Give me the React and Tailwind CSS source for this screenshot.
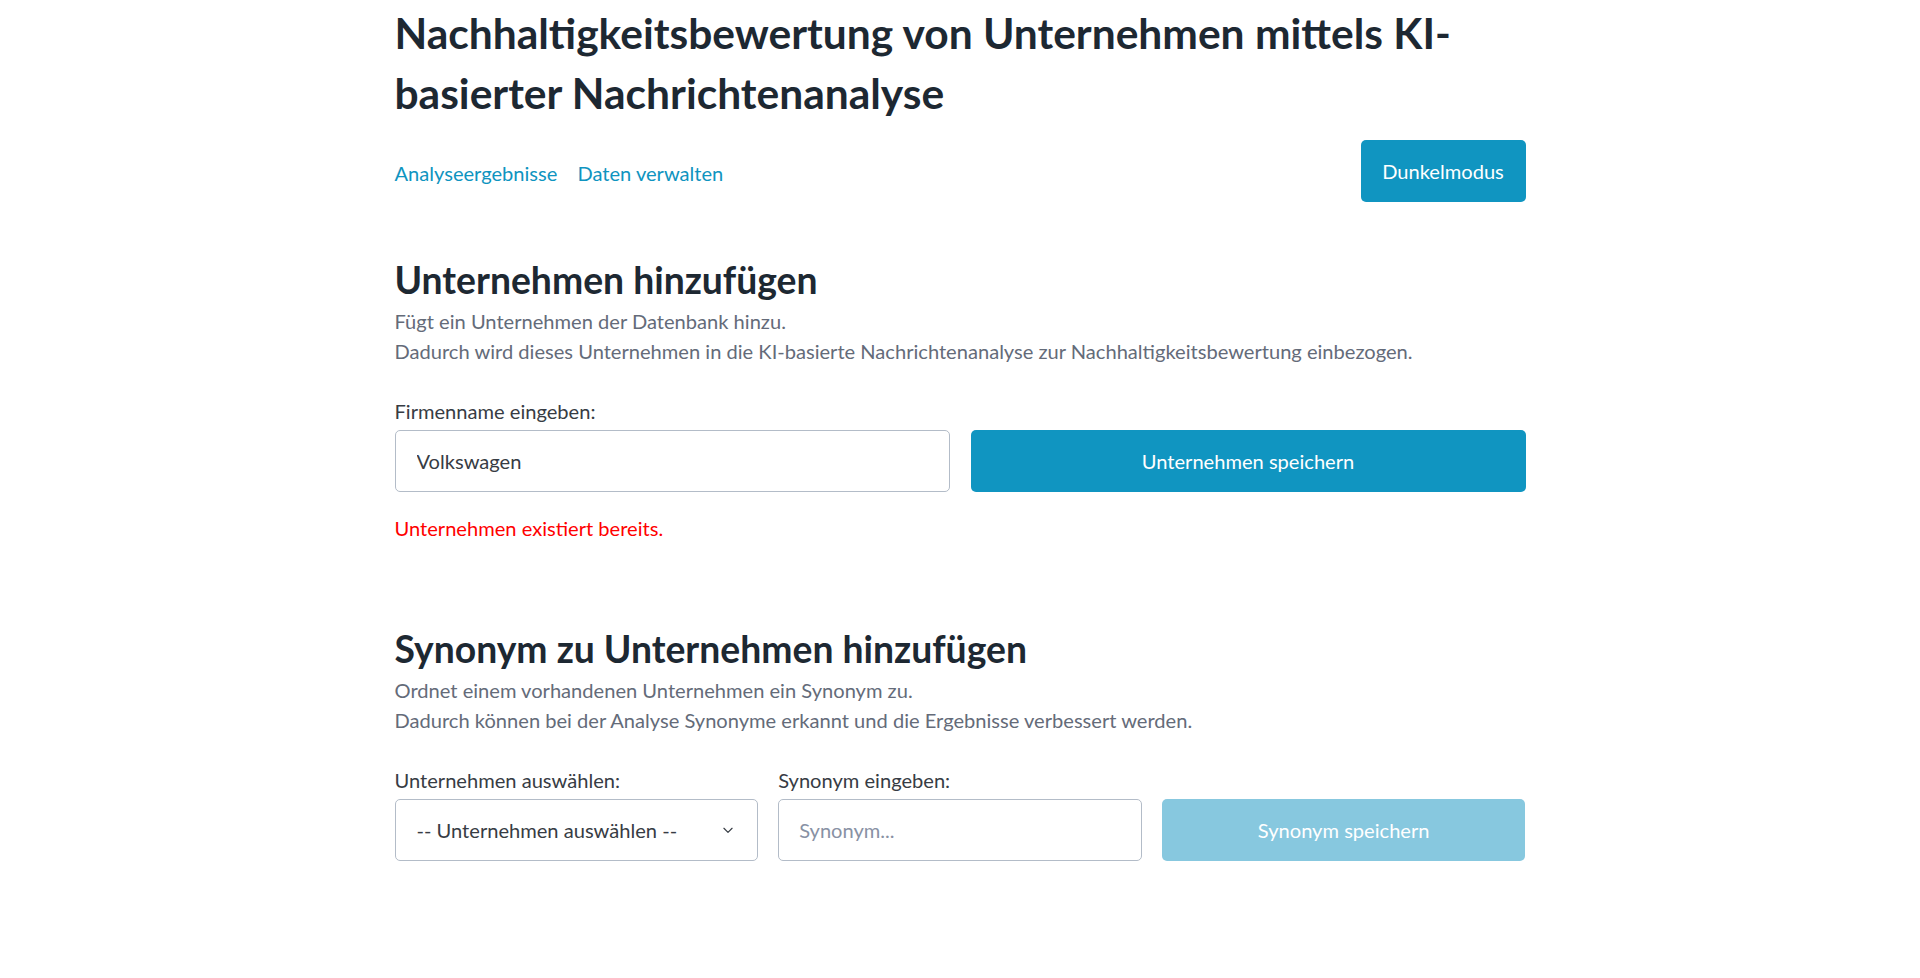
import React from 'react';

const font = { fontFamily: 'Lato, "Noto Sans", sans-serif' };

function Chevron() {
  return (
    <svg className="h-[14px] w-[14px]" viewBox="0 0 24 24" fill="none" stroke="#373c44" strokeWidth="2" strokeLinecap="round" strokeLinejoin="round">
      <path d="M5 9l7 7 7-7" />
    </svg>
  );
}

export default function App() {
  return (
    <div className="min-h-screen bg-white text-[20.1px] text-[#373c44]" style={font}>
      <main className="mx-auto w-[1131px] pt-[3px]">
        <h1 className="text-[42.5px] font-bold leading-[60px] text-[#1d2832]">
          Nachhaltigkeitsbewertung von Unternehmen mittels KI-basierter Nachrichtenanalyse
        </h1>

        <nav className="mt-[17px] flex items-center justify-between">
          <div className="flex items-center gap-[20px] pt-[4px] text-[#0f94c0]">
            <a href="#" className="hover:underline">Analyseergebnisse</a>
            <a href="#" className="hover:underline">Daten verwalten</a>
          </div>
          <button className="h-[62px] w-[165px] rounded-[5px] bg-[#1095c1] text-white">
            Dunkelmodus
          </button>
        </nav>

        <section className="mt-[55px]">
          <h2 className="text-[37.3px] font-bold leading-[46px] text-[#1d2832]">Unternehmen hinzufügen</h2>
          <p className="mt-[3px] leading-[30px] text-[#646b79]">
            Fügt ein Unternehmen der Datenbank hinzu.
            <br />
            Dadurch wird dieses Unternehmen in die KI-basierte Nachrichtenanalyse zur Nachhaltigkeitsbewertung einbezogen.
          </p>

          <label className="mt-[30px] block leading-[30px]">Firmenname eingeben:</label>
          <div className="mt-[4px] grid grid-cols-2 gap-[21px]">
            <input
              defaultValue="Volkswagen"
              className="h-[62px] rounded-[5px] border border-[#b3bcc8] px-[21px] text-[#373c44] outline-none"
            />
            <button className="h-[62px] rounded-[5px] bg-[#1095c1] text-white">Unternehmen speichern</button>
          </div>
          <p className="mt-[21px] leading-[30px] text-[#ff0000]">Unternehmen existiert bereits.</p>
        </section>

        <section className="mt-[83px]">
          <h2 className="text-[37.3px] font-bold leading-[46px] text-[#1d2832]">Synonym zu Unternehmen hinzufügen</h2>
          <p className="mt-[3px] leading-[30px] text-[#646b79]">
            Ordnet einem vorhandenen Unternehmen ein Synonym zu.
            <br />
            Dadurch können bei der Analyse Synonyme erkannt und die Ergebnisse verbessert werden.
          </p>

          <div className="mt-[30px] grid grid-cols-3 gap-x-[20px]">
            <div>
              <label className="block leading-[30px]">Unternehmen auswählen:</label>
              <div className="mt-[4px] flex h-[62px] items-center justify-between rounded-[5px] border border-[#b3bcc8] pl-[21px] pr-[22px]">
                <span>-- Unternehmen auswählen --</span>
                <Chevron />
              </div>
            </div>
            <div>
              <label className="block leading-[30px]">Synonym eingeben:</label>
              <input
                placeholder="Synonym..."
                className="mt-[4px] h-[62px] w-full rounded-[5px] border border-[#b3bcc8] px-[20px] outline-none placeholder:text-[#8891a4]"
              />
            </div>
            <div className="flex flex-col justify-end">
              <button className="h-[62px] rounded-[5px] bg-[#87c8df] text-white">Synonym speichern</button>
            </div>
          </div>
        </section>
      </main>
    </div>
  );
}
